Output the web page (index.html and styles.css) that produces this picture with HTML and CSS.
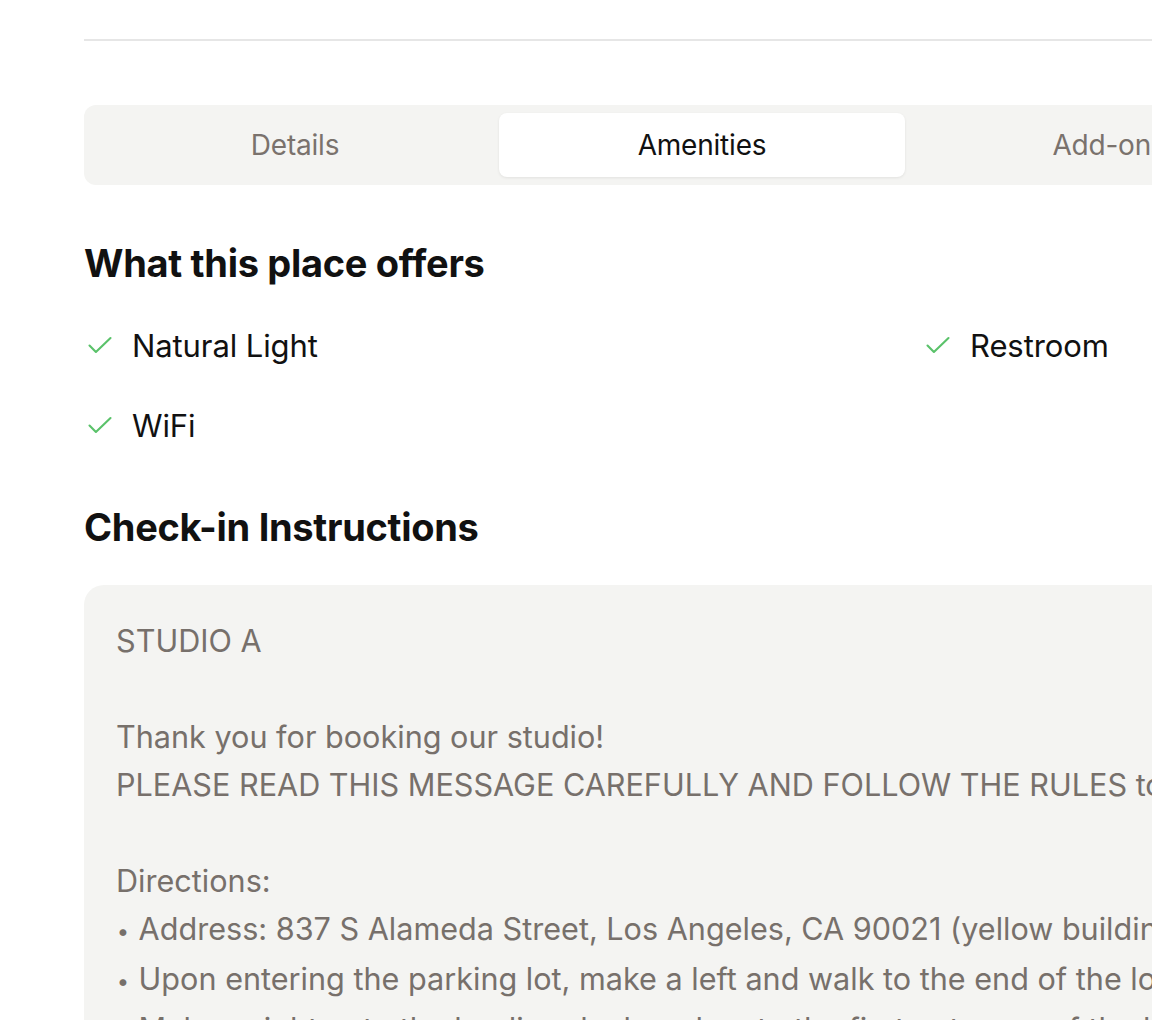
FILE: index.html
```html
<!DOCTYPE html>
<html lang="en">
<head>
<meta charset="utf-8">
<title>Amenities</title>
<link rel="stylesheet" href="styles.css">
</head>
<body>
<div class="page">
  <hr class="divider">
  <nav class="tabs">
    <div class="tab">Details</div>
    <div class="tab active">Amenities</div>
    <div class="tab">Add-ons</div>
  </nav>
  <h2 class="heading offers-heading">What this place offers</h2>
  <ul class="amenities">
    <li class="amenity"><svg class="check" viewBox="0 0 24 24"><path d="M3 12.5l5.5 5.5L21 6"/></svg><span>Natural Light</span></li>
    <li class="amenity"><svg class="check" viewBox="0 0 24 24"><path d="M3 12.5l5.5 5.5L21 6"/></svg><span>Restroom</span></li>
    <li class="amenity"><svg class="check" viewBox="0 0 24 24"><path d="M3 12.5l5.5 5.5L21 6"/></svg><span>WiFi</span></li>
  </ul>
  <h2 class="heading checkin-heading">Check-in Instructions</h2>
  <div class="instructions">STUDIO A

Thank you for booking our studio!
PLEASE READ THIS MESSAGE CAREFULLY AND FOLLOW THE RULES to ensure a smooth check-in.

Directions:
<span class="bullet">•</span> Address: 837 S Alameda Street, Los Angeles, CA 90021 (yellow building)
<span class="bullet">•</span> Upon entering the parking lot, make a left and walk to the end of the lot.
<span class="bullet">•</span> Make a right onto the loading dock and go to the first entrance of the building.</div>
</div>
</body>
</html>
```
FILE: styles.css
```css
html, body {
  margin: 0;
  padding: 0;
  background: #ffffff;
  overflow: hidden;
}
body {
  font-family: Inter, "Noto Sans", sans-serif;
  color: #111111;
}
.page {
  width: 1242px;
  padding: 0 0 0 84px;
}
.divider {
  border: 0;
  border-top: 2px solid #e6e6e6;
  margin: 39px 0 0 0;
  height: 0;
}
.tabs {
  display: grid;
  grid-template-columns: repeat(3, 406px);
  gap: 1px;
  margin-top: 64px;
  padding: 8px;
  background: #f4f4f2;
  border-radius: 12px;
  width: max-content;
}
.tab {
  height: 64px;
  display: flex;
  align-items: center;
  justify-content: center;
  font-size: 28px;
  color: #7a726d;
  border-radius: 8px;
  letter-spacing: -0.2px;
}
.tab.active {
  background: #ffffff;
  color: #111111;
  box-shadow: 0 1px 3px rgba(0,0,0,0.08);
}
.heading {
  font-size: 38px;
  font-weight: 650;
  margin: 0;
  line-height: 44px;
  letter-spacing: -0.3px;
}
.offers-heading {
  margin-top: 56px;
}
.amenities {
  list-style: none;
  margin: 36px 0 0 0;
  padding: 0;
  display: grid;
  grid-template-columns: 838px auto;
  row-gap: 32px;
}
.amenity {
  display: flex;
  align-items: center;
  height: 48px;
  font-size: 31px;
  gap: 18px;
  letter-spacing: -0.1px;
}
.check {
  width: 28px;
  height: 28px;
  margin-left: 2px;
  fill: none;
  stroke: #5ac26a;
  stroke-width: 1.8;
  stroke-linecap: round;
  stroke-linejoin: round;
}
.checkin-heading {
  margin-top: 56px;
}
.instructions {
  margin-top: 36px;
  background: #f4f4f2;
  border-radius: 20px;
  padding: 32px 32px;
  white-space: pre;
  font-size: 30.6px;
  line-height: 48px;
  color: #77706b;
  width: 1400px;
}
.bullet {
  font-size: 22px;
  display: inline-block;
  width: 14px;
  text-align: center;
  vertical-align: 1px;
}
```
